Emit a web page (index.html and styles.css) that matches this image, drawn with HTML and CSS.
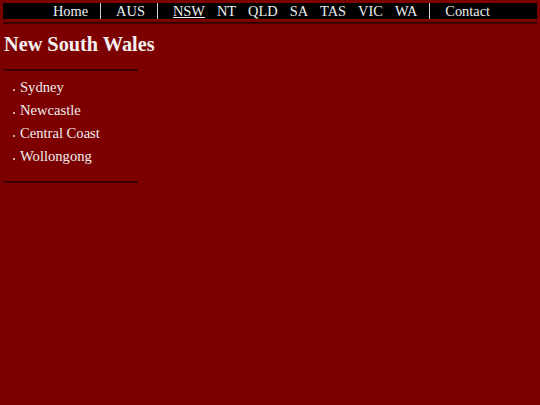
FILE: index.html
```html
<!DOCTYPE html>
<html>
<head>
<meta charset="utf-8">
<link rel="stylesheet" href="styles.css">
</head>
<body>
<nav class="nav">
  <div class="group"><a class="item" href="#">Home</a></div>
  <div class="group sep"><a class="item" href="#">AUS</a></div>
  <div class="group sep">
    <a class="item current" href="#">NSW</a>
    <a class="item" href="#">NT</a>
    <a class="item" href="#">QLD</a>
    <a class="item" href="#">SA</a>
    <a class="item" href="#">TAS</a>
    <a class="item" href="#">VIC</a>
    <a class="item" href="#">WA</a>
  </div>
  <div class="group sep"><a class="item" href="#">Contact</a></div>
</nav>
<div class="navline"></div>
<main class="content">
  <h1 class="title">New South Wales</h1>
  <div class="rule"></div>
  <ul class="cities">
    <li>Sydney</li>
    <li>Newcastle</li>
    <li>Central Coast</li>
    <li>Wollongong</li>
  </ul>
  <div class="rule"></div>
</main>
</body>
</html>
```

FILE: styles.css
```css
html, body {
  background: #7d0000;
}
body {
  margin: 3px;
  font-family: "Liberation Serif", "Times New Roman", serif;
  color: #eeeeee;
}
.nav {
  display: flex;
  justify-content: center;
  background: #000;
  height: 16px;
  font-size: 14.4px;
  line-height: 16px;
}
.group {
  display: flex;
  padding: 0 6px 0 9px;
}
.group.sep {
  border-left: 1px solid #cccccc;
}
.item {
  color: #eeeeee;
  text-decoration: none;
  padding: 0 6px;
}
.item.current {
  text-decoration: underline;
}
.navline {
  height: 2px;
  margin-top: 3px;
  background: #3a0000;
}
.content {
  padding-left: 1px;
}
.title {
  margin: 9px 0 13px;
  font-size: 20.3px;
  line-height: 23px;
  font-weight: bold;
  color: #f4f0f0;
}
.rule {
  width: 134px;
  height: 2px;
  background: #3c0000;
}
.cities {
  list-style: none;
  margin: 5px 0 13px;
  padding: 0 0 0 16px;
  font-size: 14.6px;
  line-height: 23px;
}
.cities li {
  position: relative;
}
.cities li::before {
  content: "";
  position: absolute;
  left: -7px;
  top: 13px;
  width: 2px;
  height: 2px;
  background: #e8dede;
  border-radius: 1px;
}
```
